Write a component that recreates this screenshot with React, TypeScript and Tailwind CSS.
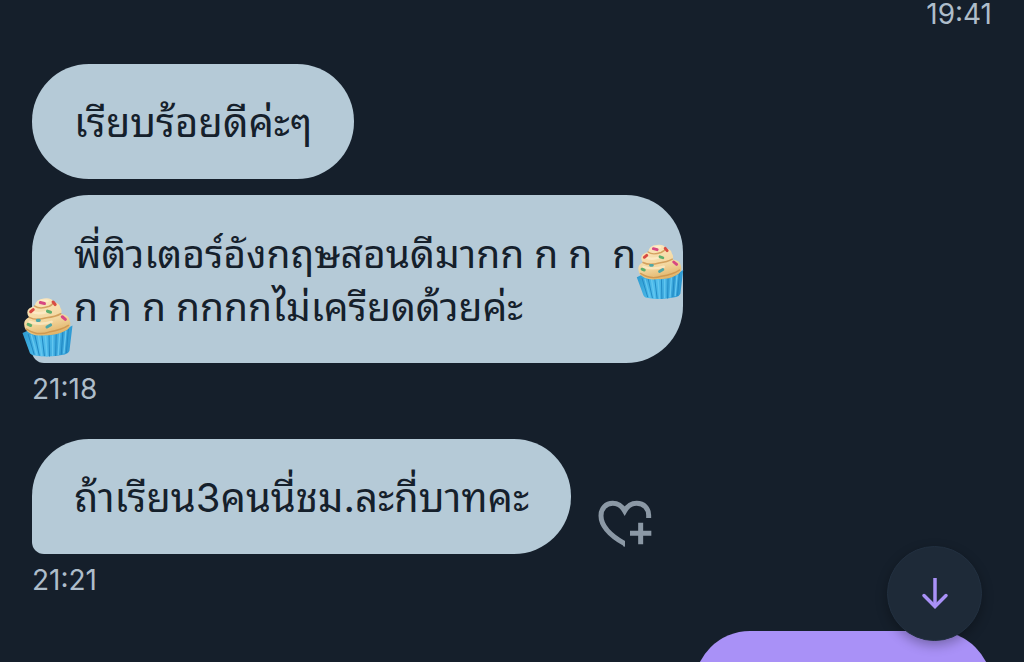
import type { ReactNode } from "react";

function Cupcake({ className }: { className: string }) {
  return (
    <svg viewBox="0 0 100 116" className={className} aria-hidden="true">
      <defs>
        <linearGradient id="wrapper" x1="0" x2="1" y1="0" y2="0.15">
          <stop offset="0" stopColor="#2b98ce" />
          <stop offset="0.45" stopColor="#4fbdec" />
          <stop offset="1" stopColor="#2f9ad3" />
        </linearGradient>
        <linearGradient id="icing" x1="0.3" x2="0.6" y1="0" y2="1">
          <stop offset="0" stopColor="#fbe6bd" />
          <stop offset="0.6" stopColor="#f3d79f" />
          <stop offset="1" stopColor="#dfb165" />
        </linearGradient>
      </defs>
      <path d="M1 70 L12 65 L90 60 L99 55 L93 105 Q91 110 84 112 Q53 119 25 114 Q17 113 15 108 Z" fill="url(#wrapper)" />
      <path d="M12 72 L24 112 M25 73 L34 114 M39 74 L44 115 M53 74 L54 116 M67 72 L66 115 M80 68 L77 112 M91 62 L87 109" stroke="#2188c3" strokeWidth="2" fill="none" />
      <path d="M18 73 L29 113 M32 74 L39 115 M46 75 L49 116 M60 74 L60 115 M74 70 L71 113 M86 65 L82 110" stroke="#62c6f0" strokeWidth="3" fill="none" />
      <path d="M7 63 Q-1 45 14 39 Q3 23 25 17 Q27 3 43 2 Q58 0 62 9 Q74 11 75 20 Q80 27 76 32 Q93 35 94 46 Q98 59 84 66 Q68 75 47 74 Q18 78 7 63Z" fill="url(#icing)" />
      <path d="M14 39 Q28 46 48 40 Q66 38 76 32 M25 17 Q34 24 52 18 Q60 15 62 9 M9 62 Q30 76 53 68 Q78 64 91 55" fill="none" stroke="#c88d45" strokeWidth="3" strokeLinecap="round" opacity="0.75" />
      <path d="M15 48 Q35 55 58 48 M19 28 Q31 34 50 28 M35 10 Q41 5 50 7" fill="none" stroke="#fff2d4" strokeWidth="5" strokeLinecap="round" opacity="0.6" />
      <g strokeWidth="6" strokeLinecap="round">
        <path d="M36 10 L44 12 M79 38 L85 43" stroke="#d74783" />
        <path d="M61 9 L65 14 M17 28 L22 24" stroke="#d84b43" />
        <path d="M50 27 L56 29 M12 53 L17 55" stroke="#5eae6d" />
        <path d="M30 45 L34 45 M49 58 L56 54" stroke="#4da6a7" />
      </g>
    </svg>
  );
}

function HeartPlusIcon() {
  return (
    <svg viewBox="54 60 162 144" className="h-12 w-[54px]" aria-hidden="true">
      <path d="M138 196 L134 191 C92 167 63 139 63 107 C63 85 78 70 98 70 C114 70 126 79 134 93 C142 79 154 70 170 70 C192 70 206 85 206 106 V114" fill="none" stroke="#8b98a5" strokeWidth="15" strokeLinejoin="miter" clipPath="url(#heart-cut)" />
      <clipPath id="heart-cut">
        <path d="M50 50 H220 V120 H135 V204 H50 Z" />
      </clipPath>
      <path d="M182 128 V193 M150 160 H214" stroke="#8b98a5" strokeWidth="15" />
    </svg>
  );
}

function Bubble({ children, tail = false }: { children: ReactNode; tail?: boolean }) {
  return (
    <div
      className={
        "relative w-fit bg-[#b5cad7] px-[42px] pt-8 pb-[30px] text-[40px] leading-[53px] text-[#15202b] " +
        (tail ? "rounded-[57px] rounded-bl-xl" : "rounded-[57px]")
      }
    >
      {children}
    </div>
  );
}

function Time({ children }: { children: string }) {
  return <time className="block text-[28px] leading-9 text-[#aebdca]">{children}</time>;
}

export default function App() {
  return (
    <main
      lang="th"
      className="relative h-screen overflow-hidden bg-[#151f2b] px-8 font-['Inter','Noto_Sans_Thai_Looped','Loma','Garuda','Umpush','Laksaman','Sarabun','Waree','Noto_Serif_Thai','Norasi',sans-serif]"
    >
      <div className="flex h-16 items-start justify-end">
        <time className="text-[28px] leading-7 text-[#aebdca]">19:41</time>
      </div>
      <section className="flex flex-col gap-4">
        <Bubble>
          <p className="whitespace-nowrap">เรียบร้อยดีค่ะๆ</p>
        </Bubble>
        <Bubble tail>
          <p className="min-w-[567px] whitespace-pre font-['Lato','Noto_Sans_Thai_Looped','Loma','Garuda','Umpush','Laksaman','Sarabun','Waree','Noto_Serif_Thai','Norasi',sans-serif] text-[39px] leading-[53px]">
            พี่ติวเตอร์อังกฤษสอนดีมากก ก ก  ก<br />ก ก ก กกกกไม่เครียดด้วยค่ะ
          </p>
          <Cupcake className="absolute -right-px top-[49px] h-[55px] w-12" />
          <Cupcake className="absolute bottom-1.5 -left-2.5 h-[60px] w-[51px]" />
        </Bubble>
      </section>
      <div className="mt-2">
        <Time>21:18</Time>
      </div>
      <section className="mt-8 flex items-end gap-[27px]">
        <Bubble tail>
          <p className="whitespace-nowrap">ถ้าเรียน3คนนี่ชม.ละกี่บาทคะ</p>
        </Bubble>
        <button type="button" aria-label="Add reaction" className="mb-1.5">
          <HeartPlusIcon />
        </button>
      </section>
      <div className="mt-2">
        <Time>21:21</Time>
      </div>
      <div className="mt-[33px] flex justify-end">
        <div className="h-28 w-[298px] rounded-[57px] bg-[#a991f7]" />
      </div>
      <button
        type="button"
        aria-label="Scroll to latest"
        className="absolute right-[42px] bottom-[21px] flex size-[95px] items-center justify-center rounded-full border border-[#223040] bg-[#1e2a38] shadow-[0_4px_12px_rgba(0,0,0,0.3)]"
      >
        <svg viewBox="0 0 28 32" className="h-8 w-7" fill="none" stroke="#a991f7" strokeWidth="3.5" aria-hidden="true">
          <path d="M14 0 V29" />
          <path d="M3 17.5 L14 28.5 L25 17.5" strokeLinecap="round" />
        </svg>
      </button>
    </main>
  );
}
